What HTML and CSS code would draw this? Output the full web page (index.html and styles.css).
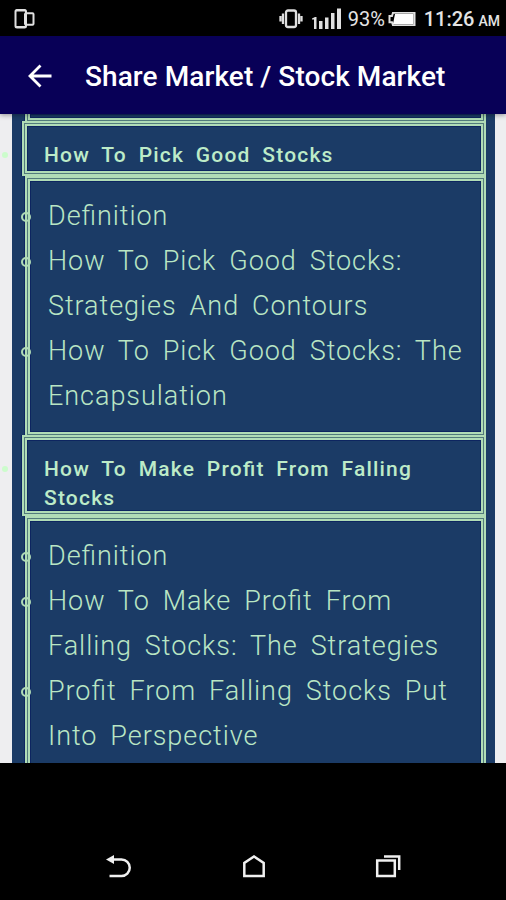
FILE: index.html
```html
<!DOCTYPE html>
<html lang="en">
<head>
    <meta charset="UTF-8">
    <meta name="viewport" content="width=device-width, initial-scale=1.0">
    <title>Share Market / Stock Market</title>
    <link rel="stylesheet" href="styles.css">
</head>
<body>

    <div class="statusbar">
        <svg class="device-icon" width="22" height="24" viewBox="0 0 22 24">
            <rect x="2.500" y="3" width="10.500" height="17.500" rx="1.500"/>
            <rect x="12" y="6.200" width="8.500" height="11.500" rx="1"/>
            <path d="M3 3.400h9.500M3 20h9.500"/>
        </svg>
        <div class="status-right">
            <svg class="vibrate-icon" width="24" height="22" viewBox="0 0 24 22">
                <rect x="7" y="2.500" width="10" height="16.500" rx="2"/>
                <path d="M4 5.500v10.500M20 5.500v10.500M1.500 8v5.500M22.500 8v5.500"/>
            </svg>
            <svg class="signal-icon" width="30" height="22" viewBox="0 0 30 22">
                <path d="M0 10.500l3-1.500h1.500v12H2v-9.500H0zM7 13h3.500v8H7zM13 9.500h3.500V21H13zM19 5h3.500v16H19zM25 .5h4V21h-4z"/>
            </svg>
            <span class="percent">93%</span>
            <svg class="battery-icon" width="28" height="14" viewBox="0 0 28 14">
                <path class="shell" d="M5 .8h21.500v12.400H5l-1-3H1.500V4H4z"/>
                <path class="charge" d="M7 2h18.500v10H5z"/>
            </svg>
            <span class="time">11:26</span>
            <span class="ampm">AM</span>
        </div>
    </div>

    <div class="appbar">
        <svg width="24" height="24" viewBox="0 0 24 24">
            <path d="M23.500 12H3M12.500 1.500L2 12l10.500 10.500"/>
        </svg>
        <h1>Share Market / Stock Market</h1>
    </div>

    <div class="page">
        <div class="panel">
            <ul class="topics">
                <li class="tail"><div class="box"></div></li>
                <li>
                    <h2><span>How To Pick Good Stocks</span></h2>
                    <ul class="box">
                        <li>Definition</li>
                        <li>How To Pick Good Stocks: Strategies And Contours</li>
                        <li>How To Pick Good Stocks: The Encapsulation</li>
                    </ul>
                </li>
                <li>
                    <h2><span>How To Make Profit From Falling Stocks</span></h2>
                    <ul class="box">
                        <li>Definition</li>
                        <li>How To Make Profit From Falling Stocks: The Strategies</li>
                        <li>Profit From Falling Stocks Put Into Perspective</li>
                    </ul>
                </li>
            </ul>
        </div>
    </div>

    <div class="navbar">
        <svg width="26" height="24" viewBox="0 0 26 24">
            <path d="M6 4.500h9.500a8.200 8.200 0 0 1 0 16.500H3.500"/>
            <path class="solid" d="M0 4.500L8 0v9z"/>
        </svg>
        <svg width="22" height="24" viewBox="0 0 22 24">
            <path d="M1.300 21V8L11 1.500 20.700 8v13z"/>
        </svg>
        <svg width="26" height="24" viewBox="0 0 26 24">
            <path d="M2.200 5.500h17.600V21H2.200zM9 1.500h15.200V15"/>
        </svg>
    </div>

</body>
</html>
```

FILE: styles.css
```css
* {
    box-sizing: border-box;
}
body {
    font-family: Roboto, sans-serif;
    background-color: #000;
    margin: 0;
    height: 900px;
    display: flex;
    flex-direction: column;
    overflow: hidden;
}
.statusbar {
    height: 36px;
    display: flex;
    justify-content: space-between;
    align-items: center;
    padding: 1px 6px 0 13px;
    color: #e4e4e4;
}
.statusbar svg {
    fill: none;
    stroke: #e0e0e0;
    stroke-width: 2;
}
.statusbar .vibrate-icon {
    stroke-width: 2.3;
}
.status-right {
    display: flex;
    align-items: center;
}
.statusbar .signal-icon {
    fill: #e0e0e0;
    stroke: none;
    margin-left: 9px;
}
.percent {
    font-size: 20px;
    margin-left: 6px;
    width: 36px;
}
.battery-icon {
    margin-left: 4px;
}
.statusbar .charge {
    fill: #fff;
    stroke: none;
}
.time {
    font-size: 20px;
    font-weight: 500;
    margin-left: 8px;
}
.ampm {
    font-size: 14px;
    font-weight: 500;
    margin: 5px 0 0 4px;
}
.appbar {
    height: 78px;
    background-color: #080057;
    display: flex;
    align-items: center;
    padding: 1px 0 0 28px;
    position: relative;
    z-index: 1;
    box-shadow: 0 1px 5px rgba(0, 0, 0, 0.4);
}
.appbar svg {
    fill: none;
    stroke: #fff;
    stroke-width: 2.8;
}
.appbar h1 {
    margin: 2px 0 0 33px;
    font-size: 28px;
    font-weight: 500;
    letter-spacing: 0.08px;
    color: #fff;
    white-space: nowrap;
}
.page {
    height: 649px;
    background-color: #eeeef0;
    padding: 0 11px 0 12px;
    overflow: hidden;
}
.panel {
    height: 100%;
    background-color: #1b3b66;
    padding: 0 9px 0 10px;
}
.topics {
    list-style: none;
    margin: 0;
    padding: 0;
    color: #b9e6c4;
    font-feature-settings: "liga" 1;
}
.topics > li {
    position: relative;
}
.topics > li + li {
    margin-top: -2px;
}
/* faint outer bullet, falls on the page margin */
.topics > li::before {
    content: "";
    position: absolute;
    left: -20px;
    top: 31px;
    width: 6px;
    height: 6px;
    border-radius: 50%;
    background-color: #ccfccc;
}
.topics > .tail::before {
    display: none;
}
h2, .box {
    border: 5px double #b0dcb6;
    background: linear-gradient(#1b3b66, #1b3b66) padding-box, linear-gradient(#527b7c, #527b7c) border-box;
    box-shadow: inset 0 0 0 1px #0d2560, -1px 0 #0d2560;
}
h2 {
    margin: 0;
    min-height: 55px;
    padding: 15px 17px 0;
    font-size: 21px;
    font-weight: 500;
    line-height: 29px;
    letter-spacing: 1.2px;
    word-spacing: 5.3px;
    color: #bdebc8;
}
h2 span {
    display: block;
    margin-bottom: -2px;
}
.box {
    list-style: none;
    margin: 0 0 0 3px;
    padding: 13px 0 13px 18px;
    font-size: 27px;
    font-weight: 300;
    line-height: 45px;
    letter-spacing: 0.95px;
    word-spacing: 5.4px;
}
.tail .box {
    height: 9px;
    padding: 0;
    border-top: none;
}
.box li {
    position: relative;
}
.box li::before {
    content: "";
    position: absolute;
    left: -27px;
    top: 18px;
    width: 6px;
    height: 6px;
    border: 2px solid #b0dcb6;
    border-radius: 50%;
}
.navbar {
    flex: 1;
    display: flex;
    justify-content: space-between;
    align-items: flex-end;
    padding: 0 105px 21px 106px;
}
.navbar svg {
    fill: none;
    stroke: #f0f0f0;
    stroke-width: 2.5;
}
.navbar .solid {
    fill: #f0f0f0;
    stroke: none;
}
```
